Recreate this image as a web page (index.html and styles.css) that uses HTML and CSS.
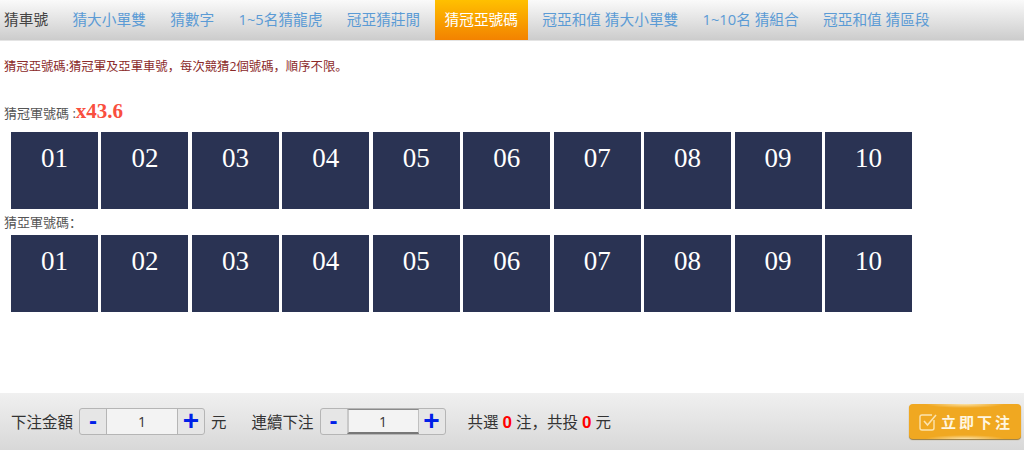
FILE: index.html
```html
<!DOCTYPE html>
<html lang="zh">
<head>
    <meta charset="UTF-8">
    <title>猜冠亞號碼</title>
    <link rel="stylesheet" href="styles.css">
</head>
<body>
    <div class="page">
        <div class="tabs">
            <a class="tab first">猜車號</a>
            <a class="tab link">猜大小單雙</a>
            <a class="tab link">猜數字</a>
            <a class="tab link">1~5名猜龍虎</a>
            <a class="tab link">冠亞猜莊閒</a>
            <a class="tab link active">猜冠亞號碼</a>
            <a class="tab link">冠亞和值 猜大小單雙</a>
            <a class="tab link">1~10名 猜組合</a>
            <a class="tab link">冠亞和值 猜區段</a>
        </div>
        <div class="content">
            <p class="rule">猜冠亞號碼:猜冠軍及亞軍車號，每次競猜2個號碼，順序不限。</p>
            <div class="pick-title champ">猜冠軍號碼 :<span class="odds">x43.6</span></div>
            <div class="numbers">
                <div class="num">01</div>
                <div class="num">02</div>
                <div class="num">03</div>
                <div class="num">04</div>
                <div class="num">05</div>
                <div class="num">06</div>
                <div class="num">07</div>
                <div class="num">08</div>
                <div class="num">09</div>
                <div class="num">10</div>
            </div>
            <div class="pick-title second">猜亞軍號碼：</div>
            <div class="numbers">
                <div class="num">01</div>
                <div class="num">02</div>
                <div class="num">03</div>
                <div class="num">04</div>
                <div class="num">05</div>
                <div class="num">06</div>
                <div class="num">07</div>
                <div class="num">08</div>
                <div class="num">09</div>
                <div class="num">10</div>
            </div>
        </div>
        <div class="bet-bar">
            <span class="bet-label">下注金額</span>
            <div class="stepper">
                <span class="step minus">-</span>
                <span class="amount">1</span>
                <span class="step">+</span>
            </div>
            <span class="bet-label unit">元</span>
            <span class="bet-label repeat">連續下注</span>
            <div class="stepper">
                <span class="step minus">-</span>
                <span class="amount focused">1</span>
                <span class="step">+</span>
            </div>
            <span class="bet-label summary">共選 <b>0</b> 注，共投 <b>0</b> 元</span>
            <a class="submit">
                <svg class="submit-icon" width="20" height="20" viewBox="0 0 20 20" fill="none">
                    <path d="M16 8v8a2 2 0 0 1-2 2H4a2 2 0 0 1-2-2V5a2 2 0 0 1 2-2h10" stroke="#fbe3ae" stroke-width="1.4"/>
                    <path d="M6 9l3.5 4L18 3" stroke="#fbe3ae" stroke-width="1.6"/>
                </svg>
                立即下注
            </a>
        </div>
    </div>
</body>
</html>
```

FILE: styles.css
```css
* {
    box-sizing: border-box;
}
body {
    margin: 0;
    background: #fff;
    color: #333;
    font-family: "Open Sans", "Noto Sans CJK SC", sans-serif;
    overflow: hidden;
}
.page {
    height: 453px;
    display: flex;
    flex-direction: column;
}
.tabs {
    height: 41px;
    display: flex;
    gap: 4.3px;
    background: linear-gradient(#fafafa, #cccccc);
    border-bottom: 1px solid #e4e4e4;
    font-size: 14.7px;
    white-space: nowrap;
}
.tab {
    height: 40px;
    line-height: 38px;
    padding: 0 10px;
}
.tab.first {
    padding-left: 4px;
    color: #444;
}
.tab.link {
    color: #5b9bd5;
}
.tab.active {
    background: linear-gradient(#ffc000, #f38200);
    color: #fff;
}
.content {
    flex: 1;
}
.rule {
    margin: 17px 0 0 4px;
    font-size: 12.35px;
    line-height: 17px;
    color: #8b2a2a;
}
.pick-title {
    margin-left: 4px;
    font-size: 13px;
    color: #555;
}
.pick-title.champ {
    margin-top: 19px;
    height: 38px;
    line-height: 34px;
}
.pick-title.second {
    height: 26px;
    line-height: 27px;
}
.odds {
    font-family: "Liberation Serif", serif;
    font-size: 21px;
    font-weight: bold;
    color: #f94f3f;
}
.numbers {
    display: flex;
    gap: 3.45px;
    margin-left: 11px;
}
.num {
    width: 87px;
    height: 77px;
    padding-top: 7px;
    background: #2a3353;
    color: #fff;
    font-family: "Liberation Serif", serif;
    font-size: 27px;
    line-height: 38px;
    text-align: center;
}
.bet-bar {
    height: 57px;
    margin-bottom: 3px;
    padding: 0 3px 0 11px;
    display: flex;
    align-items: center;
    background: linear-gradient(#f0f0f0, #d8d8d8);
}
.bet-label {
    font-size: 15.5px;
    color: #333;
}
.bet-label b {
    color: #f00;
    font-family: "Liberation Sans", sans-serif;
    font-size: 17px;
}
.unit {
    margin-left: 6px;
}
.repeat {
    margin-left: 25px;
}
.summary {
    margin-left: 22px;
}
.stepper {
    width: 126px;
    height: 27px;
    margin-left: 6px;
    display: flex;
    border: 1px solid #b5b5b5;
    border-radius: 3px;
    background: #e6e6e6;
}
.step {
    flex: 1;
    color: #0020e8;
    font-family: "Liberation Sans", sans-serif;
    font-size: 28px;
    font-weight: bold;
    line-height: 23px;
    text-align: center;
}
.step.minus {
    font-size: 24px;
}
.amount {
    width: 72px;
    background: #f3f3f3;
    border-left: 1px solid #b5b5b5;
    border-right: 1px solid #b5b5b5;
    font-size: 14px;
    line-height: 25px;
    text-align: center;
}
.amount.focused {
    border: 2px solid #8a8a8a;
    border-top-width: 1px;
    border-right-width: 1px;
    border-color: #8a8a8a #c0c0c0 #777 #c8c8c8;
    line-height: 23px;
}
.submit {
    width: 112px;
    height: 35px;
    margin: 0 0 0 auto;
    padding-left: 9px;
    display: flex;
    align-items: center;
    gap: 3px;
    border-radius: 4px;
    background: radial-gradient(ellipse 40px 4px at 50% 0, #fbe2a8, transparent),
                radial-gradient(ellipse 40px 4px at 50% 100%, #fbe2a8, transparent),
                #f0a821;
    box-shadow: 0 1px 1px #9a7a3a;
    color: #fff6e0;
    font-size: 15px;
    font-weight: bold;
    letter-spacing: 3px;
    white-space: nowrap;
}
.submit-icon {
    flex: none;
}
```
